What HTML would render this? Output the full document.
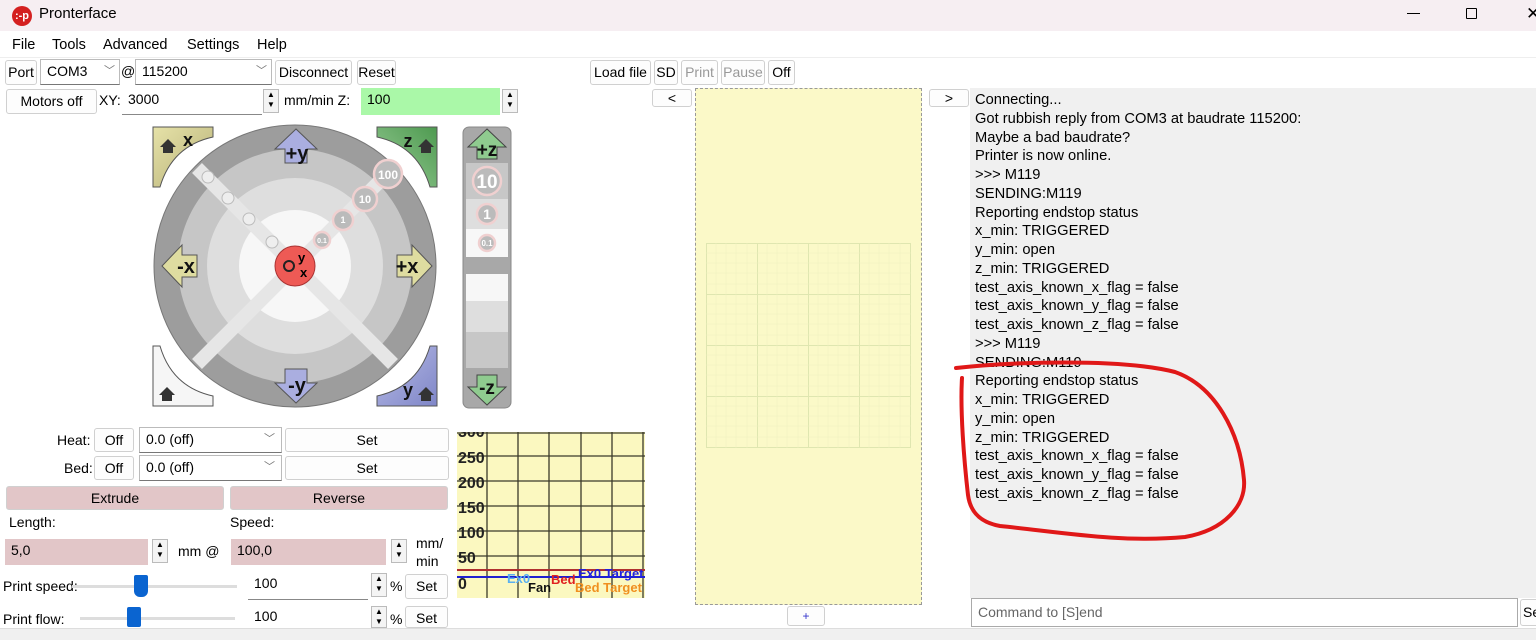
<!DOCTYPE html><html><head><meta charset="utf-8"><style>
*{box-sizing:border-box;margin:0;padding:0}
body{width:1536px;height:640px;overflow:hidden;background:#fff;font-family:"Liberation Sans",sans-serif;font-size:14px;color:#000;position:relative}
.a{position:absolute}
.btn{position:absolute;background:#fdfdfd;border:1px solid #d0d0d0;border-radius:3px;text-align:center;font-size:14px;line-height:22px}
.inp{position:absolute;background:#fff;border:1px solid #bbb;border-bottom:1px solid #777;font-size:14px;line-height:22px;padding-left:6px}
.spin{position:absolute;width:16px;border:1px solid #bbb;background:#f4f4f4;font-size:8px;text-align:center;line-height:10px}
.log div{height:18.76px;line-height:18.76px}
.m{position:absolute;top:37px;font-size:14.5px}
</style></head><body>
<!-- title -->
<div class="a" style="left:0;top:0;width:1536px;height:31px;background:#f6eef2"></div>
<div class="a" style="left:12px;top:6px;width:20px;height:20px;border-radius:50%;background:#d42020;color:#fff;font-size:11px;line-height:20px;text-align:center;font-weight:bold">:-p</div>
<div class="a" style="left:39px;top:5px;font-size:15px">Pronterface</div>
<div class="a" style="left:1407px;top:13px;width:13px;height:1px;background:#000"></div>
<div class="a" style="left:1466px;top:8px;width:11px;height:11px;border:1px solid #000;border-radius:1px"></div>
<div class="a" style="left:1526px;top:4px;font-size:17px">✕</div>
<!-- menu -->
<div class="m" style="left:12px">File</div><div class="m" style="left:52px">Tools</div><div class="m" style="left:103px">Advanced</div><div class="m" style="left:187px">Settings</div><div class="m" style="left:257px">Help</div>
<div class="a" style="left:0;top:57px;width:1536px;height:1px;background:#eee"></div>
<!-- row1 -->
<div class="btn" style="left:5px;top:60px;width:32px;height:25px">Port</div>
<div class="inp" style="left:40px;top:59px;width:80px;height:26px">COM3<span style="position:absolute;right:4px;color:#777;font-size:11px">﹀</span></div>
<div class="a" style="left:121px;top:63px">@</div>
<div class="inp" style="left:135px;top:59px;width:137px;height:26px">115200<span style="position:absolute;right:4px;color:#777;font-size:11px">﹀</span></div>
<div class="btn" style="left:275px;top:60px;width:77px;height:25px">Disconnect</div>
<div class="btn" style="left:357px;top:60px;width:39px;height:25px">Reset</div>
<div class="btn" style="left:590px;top:60px;width:61px;height:25px">Load file</div>
<div class="btn" style="left:654px;top:60px;width:24px;height:25px">SD</div>
<div class="btn" style="left:681px;top:60px;width:37px;height:25px;color:#999">Print</div>
<div class="btn" style="left:721px;top:60px;width:44px;height:25px;color:#999">Pause</div>
<div class="btn" style="left:768px;top:60px;width:27px;height:25px">Off</div>
<!-- row2 -->
<div class="btn" style="left:6px;top:89px;width:91px;height:25px">Motors off</div>
<div class="a" style="left:99px;top:92px">XY:</div>
<div class="inp" style="left:122px;top:88px;width:140px;height:27px;border:none;border-bottom:1px solid #888">3000</div>
<div class="spin" style="left:263px;top:89px;height:24px">▲<br>▼</div>
<div class="a" style="left:284px;top:92px">mm/min Z:</div>
<div class="inp" style="left:361px;top:88px;width:139px;height:27px;background:#aaf8a8;border:none">100</div>
<div class="spin" style="left:502px;top:89px;height:24px">▲<br>▼</div>
<div class="btn" style="left:652px;top:89px;width:40px;height:18px;line-height:16px">&lt;</div>
<div class="btn" style="left:929px;top:89px;width:40px;height:18px;line-height:16px">&gt;</div>
<!-- jog -->
<svg class="a" style="left:140px;top:120px" width="380" height="300" viewBox="140 120 380 300">
<defs><linearGradient id="gy" x1="0" y1="0" x2="1" y2="1"><stop offset="0" stop-color="#e6e2a8"/><stop offset="1" stop-color="#b6b078"/></linearGradient>
<linearGradient id="gg" x1="1" y1="0" x2="0" y2="1"><stop offset="0" stop-color="#4e9a50"/><stop offset="1" stop-color="#9acd98"/></linearGradient>
<linearGradient id="gb" x1="1" y1="1" x2="0" y2="0"><stop offset="0" stop-color="#7f86c8"/><stop offset="1" stop-color="#b8bce6"/></linearGradient></defs>
<path d="M153 127H213V137Q172 146 160 187H153Z" fill="url(#gy)" stroke="#555"/>
<path d="M437 127H377V137Q418 146 430 187H437Z" fill="url(#gg)" stroke="#555"/>
<path d="M153 406H213V396Q172 387 160 346H153Z" fill="#f6f6f6" stroke="#555"/>
<path d="M437 406H377V396Q418 387 430 346H437Z" fill="url(#gb)" stroke="#555"/>
<circle cx="295" cy="266" r="141" fill="#9d9d9d" stroke="#777"/>
<circle cx="295" cy="266" r="117" fill="#c6c6c6"/>
<circle cx="295" cy="266" r="88" fill="#dedede"/>
<circle cx="295" cy="266" r="56" fill="#f7f7f7"/>
<line x1="197" y1="168" x2="393" y2="364" stroke="#e6e6e6" stroke-width="14"/>
<line x1="393" y1="168" x2="197" y2="364" stroke="#e6e6e6" stroke-width="14"/>
<g fill="#eee" stroke="#bbb"><circle cx="208" cy="177" r="6"/><circle cx="228" cy="198" r="6"/><circle cx="249" cy="219" r="6"/><circle cx="272" cy="242" r="6"/></g>
<g fill="#bbb" stroke="#f0d0d0" stroke-width="2.5"><circle cx="388" cy="174" r="14"/><circle cx="365" cy="199" r="12"/><circle cx="343" cy="220" r="10"/><circle cx="322" cy="240" r="8"/></g>
<g fill="#fff" font-weight="bold" text-anchor="middle" font-family="Liberation Sans"><text x="388" y="179" font-size="12">100</text><text x="365" y="203" font-size="11">10</text><text x="343" y="223" font-size="9">1</text><text x="322" y="243" font-size="7">0.1</text></g>
<circle cx="295" cy="266" r="20" fill="#ee5a55" stroke="#a33"/>
<text x="298" y="262" font-size="13" font-weight="bold" font-family="Liberation Sans">y</text><text x="300" y="277" font-size="13" font-weight="bold" font-family="Liberation Sans">x</text>
<circle cx="289" cy="266" r="5" fill="none" stroke="#222" stroke-width="2"/>
<g stroke="#555" stroke-width="1">
<path d="M296 129l-21 20h10v14h22v-14h10z" fill="#aaaee0"/>
<path d="M296 403l-21-20h10v-14h22v14h10z" fill="#aaaee0"/>
<path d="M162 266l20-21v10h15v22h-15v10z" fill="#dedca0"/>
<path d="M432 266l-20-21v10h-15v22h15v10z" fill="#dedca0"/>
</g>
<g font-family="Liberation Sans" font-weight="bold" font-size="20" fill="#111" text-anchor="middle">
<text x="297" y="160">+y</text><text x="297" y="392">-y</text><text x="186" y="273">-x</text><text x="407" y="273">+x</text>
<text x="188" y="146" font-size="18">x</text><text x="408" y="147" font-size="18">z</text><text x="408" y="396" font-size="18">y</text></g>
<g fill="#333"><path d="M160 147l8-8 8 8h-3v6h-10v-6z"/><path d="M418 147l8-8 8 8h-3v6h-10v-6z"/><path d="M418 395l8-8 8 8h-3v6h-10v-6z"/><path d="M159 395l8-8 8 8h-3v6h-10v-6z"/></g>
<!-- z bar -->
<rect x="463" y="127" width="48" height="281" rx="6" fill="#a8a8a8" stroke="#888"/>
<rect x="466" y="163" width="42" height="36" fill="#c7c7c7"/>
<rect x="466" y="199" width="42" height="30" fill="#dedede"/>
<rect x="466" y="229" width="42" height="28" fill="#f7f7f7"/>
<rect x="466" y="274" width="42" height="27" fill="#f7f7f7"/>
<rect x="466" y="301" width="42" height="31" fill="#dedede"/>
<rect x="466" y="332" width="42" height="36" fill="#c7c7c7"/>
<path d="M487 129l-19 18h9v12h20v-12h9z" fill="#8fcb8f" stroke="#444"/>
<path d="M487 405l-19-18h9v-12h20v12h9z" fill="#8fcb8f" stroke="#444"/>
<g fill="#bbb" stroke="#f0d0d0" stroke-width="2.5"><circle cx="487" cy="181" r="14"/><circle cx="487" cy="214" r="10"/><circle cx="487" cy="243" r="8"/></g>
<g fill="#fff" font-family="Liberation Sans" font-weight="bold" text-anchor="middle"><text x="487" y="188" font-size="19">10</text><text x="487" y="219" font-size="14">1</text><text x="487" y="246" font-size="8">0.1</text></g>
<g font-family="Liberation Sans" font-weight="bold" font-size="19" fill="#111" text-anchor="middle"><text x="487" y="156">+z</text><text x="487" y="394">-z</text></g>
</svg>
<!-- temps -->
<div class="a" style="left:57px;top:432px">Heat:</div>
<div class="btn" style="left:94px;top:428px;width:40px;height:24px">Off</div>
<div class="inp" style="left:139px;top:427px;width:143px;height:26px">0.0 (off)<span style="position:absolute;right:6px;color:#777;font-size:11px">﹀</span></div>
<div class="btn" style="left:285px;top:428px;width:164px;height:24px">Set</div>
<div class="a" style="left:64px;top:460px">Bed:</div>
<div class="btn" style="left:94px;top:456px;width:40px;height:24px">Off</div>
<div class="inp" style="left:139px;top:455px;width:143px;height:26px">0.0 (off)<span style="position:absolute;right:6px;color:#777;font-size:11px">﹀</span></div>
<div class="btn" style="left:285px;top:456px;width:164px;height:24px">Set</div>
<div class="btn" style="left:6px;top:486px;width:218px;height:24px;background:#e2c6c8">Extrude</div>
<div class="btn" style="left:230px;top:486px;width:218px;height:24px;background:#e2c6c8">Reverse</div>
<div class="a" style="left:9px;top:514px">Length:</div>
<div class="a" style="left:230px;top:514px">Speed:</div>
<div class="inp" style="left:5px;top:539px;width:143px;height:26px;background:#e2c6c8;border:none">5,0</div>
<div class="spin" style="left:152px;top:539px;height:24px">▲<br>▼</div>
<div class="a" style="left:178px;top:543px">mm @</div>
<div class="inp" style="left:231px;top:539px;width:155px;height:26px;background:#e2c6c8;border:none">100,0</div>
<div class="spin" style="left:391px;top:539px;height:24px">▲<br>▼</div>
<div class="a" style="left:416px;top:534px;line-height:18px">mm/<br>min</div>
<div class="a" style="left:3px;top:578px">Print speed:</div>
<div class="a" style="left:72px;top:585px;width:165px;height:3px;background:#ddd"></div>
<div class="a" style="left:134px;top:575px;width:14px;height:22px;background:#0a64d0;border-radius:2px 2px 6px 6px"></div>
<div class="inp" style="left:248px;top:572px;width:120px;height:28px;border:none;border-bottom:1px solid #888">100</div>
<div class="spin" style="left:371px;top:573px;height:24px">▲<br>▼</div>
<div class="a" style="left:390px;top:578px">%</div>
<div class="btn" style="left:405px;top:574px;width:43px;height:25px">Set</div>
<div class="a" style="left:3px;top:611px">Print flow:</div>
<div class="a" style="left:80px;top:617px;width:155px;height:3px;background:#ddd"></div>
<div class="a" style="left:127px;top:607px;width:14px;height:20px;background:#0a64d0;border-radius:2px"></div>
<div class="inp" style="left:248px;top:605px;width:120px;height:23px;border:none">100</div>
<div class="spin" style="left:371px;top:606px;height:22px">▲<br>▼</div>
<div class="a" style="left:390px;top:611px">%</div>
<div class="btn" style="left:405px;top:606px;width:43px;height:22px">Set</div>
<!-- graph -->
<svg class="a" style="left:457px;top:432px" width="188" height="166">
<rect width="188" height="166" fill="#fbf8c0"/>
<g stroke="#3a3a2a" stroke-width="1.3"><line x1="30" y1="0" x2="30" y2="166"/><line x1="61" y1="0" x2="61" y2="166"/><line x1="92" y1="0" x2="92" y2="166"/><line x1="124" y1="0" x2="124" y2="166"/><line x1="155" y1="0" x2="155" y2="166"/><line x1="186" y1="0" x2="186" y2="166"/>
<line x1="0" y1="1" x2="188" y2="1"/><line x1="0" y1="24" x2="188" y2="24"/><line x1="0" y1="49" x2="188" y2="49"/><line x1="0" y1="74" x2="188" y2="74"/><line x1="0" y1="99" x2="188" y2="99"/><line x1="0" y1="124" x2="188" y2="124"/></g>
<line x1="0" y1="138" x2="188" y2="138" stroke="#b03030" stroke-width="2"/>
<line x1="0" y1="145" x2="188" y2="145" stroke="#2020d0" stroke-width="2"/>
<g font-family="Liberation Sans" font-size="16" font-weight="bold" fill="#222"><text x="1" y="5">300</text><text x="1" y="31">250</text><text x="1" y="56">200</text><text x="1" y="81">150</text><text x="1" y="106">100</text><text x="1" y="131">50</text><text x="1" y="157">0</text></g>
<g font-family="Liberation Sans" font-size="13" font-weight="bold"><text x="50" y="151" fill="#5ab0f0">Ex0</text><text x="71" y="160" fill="#111">Fan</text><text x="94" y="152" fill="#e02020">Bed</text><text x="121" y="146" fill="#2020e0">Ex0 Target</text><text x="118" y="160" fill="#f09020">Bed Target</text></g>
</svg>
<!-- gcode view -->
<div class="a" style="left:695px;top:88px;width:227px;height:517px;background:#fbf9c8;border:1px dashed #999"></div>
<svg class="a" style="left:706px;top:243px" width="205" height="205"><g stroke="#dfe6b0" stroke-width="1"><path d="M0 .5h205M0 51.5h205M0 102.5h205M0 153.5h205M0 204.5h205M.5 0v205M51.5 0v205M102.5 0v205M153.5 0v205M204.5 0v205"/></g><g stroke="#eef0c0" stroke-width=".5"><path d="M0 10h205M0 20h205M0 30h205M0 41h205M0 61h205M0 71h205M0 81h205M0 92h205M0 112h205M0 122h205M0 132h205M0 143h205M0 163h205M0 173h205M0 183h205M0 194h205M10 0v205M20 0v205M30 0v205M41 0v205M61 0v205M71 0v205M81 0v205M92 0v205M112 0v205M122 0v205M132 0v205M143 0v205M163 0v205M173 0v205M183 0v205M194 0v205"/></g></svg>
<div class="btn" style="left:787px;top:606px;width:38px;height:20px;line-height:18px;color:#33c;font-size:12px">+</div>
<!-- log -->
<div class="a" style="left:970px;top:88px;width:566px;height:510px;background:#f0f0f0"></div>
<div class="a log" style="left:975px;top:91px;font-size:14.7px">
<div>Connecting...</div><div>Got rubbish reply from COM3 at baudrate 115200:</div><div>Maybe a bad baudrate?</div><div>Printer is now online.</div><div>&gt;&gt;&gt; M119</div><div>SENDING:M119</div><div>Reporting endstop status</div><div>x_min: TRIGGERED</div><div>y_min: open</div><div>z_min: TRIGGERED</div><div>test_axis_known_x_flag = false</div><div>test_axis_known_y_flag = false</div><div>test_axis_known_z_flag = false</div><div>&gt;&gt;&gt; M119</div><div>SENDING:M119</div><div>Reporting endstop status</div><div>x_min: TRIGGERED</div><div>y_min: open</div><div>z_min: TRIGGERED</div><div>test_axis_known_x_flag = false</div><div>test_axis_known_y_flag = false</div><div>test_axis_known_z_flag = false</div>
</div>
<svg class="a" style="left:0;top:0" width="1536" height="640"><path d="M956 368C1010 362 1120 358 1175 372C1215 386 1240 432 1244 480C1246 505 1225 530 1185 537C1120 543 1060 532 1000 526C978 522 970 510 968 495C964 460 960 410 962 378" fill="none" stroke="#e01818" stroke-width="4" stroke-linecap="round"/></svg>
<div class="inp" style="left:971px;top:598px;width:547px;height:29px;line-height:27px;color:#666;border:1px solid #aaa">Command to [S]end</div>
<div class="btn" style="left:1520px;top:599px;width:30px;height:27px;line-height:25px;text-align:left;padding-left:2px">Se</div>
<!-- status -->
<div class="a" style="left:0;top:628px;width:1536px;height:12px;background:#f0f0f0;border-top:1px solid #ddd"></div>
</body></html>
